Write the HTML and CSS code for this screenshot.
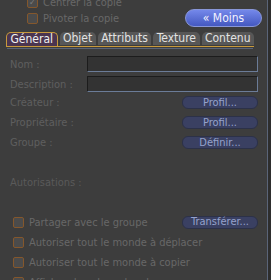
FILE: index.html
```html
<!DOCTYPE html>
<html>
<head>
  <link rel="stylesheet" href="styles.css">
</head>
<body>

<div class="panel">
  <div class="top">
    <div class="copy-opts">
      <label class="check"><span class="box checked">&#10003;</span> Centrer la copie</label>
      <label class="check"><span class="box"></span> Pivoter la copie</label>
    </div>
    <button class="less">&laquo; Moins</button>
  </div>

  <div class="tabs">
    <div class="tab active">Général</div>
    <div class="tab">Objet</div>
    <div class="tab">Attributs</div>
    <div class="tab">Texture</div>
    <div class="tab">Contenu</div>
  </div>

  <div class="content">
    <div class="row">
      <span class="lbl">Nom :</span>
      <input type="text" class="field">
    </div>
    <div class="row">
      <span class="lbl">Description :</span>
      <input type="text" class="field">
    </div>
    <div class="row short">
      <span class="lbl">Créateur :</span>
      <button class="btn">Profil...</button>
    </div>
    <div class="row short">
      <span class="lbl">Propriétaire :</span>
      <button class="btn">Profil...</button>
    </div>
    <div class="row short">
      <span class="lbl">Groupe :</span>
      <button class="btn">Définir...</button>
    </div>

    <div class="section">Autorisations :</div>

    <div class="perm">
      <label class="check"><span class="box"></span> Partager avec le groupe</label>
      <button class="btn">Transférer...</button>
    </div>
    <div class="perm">
      <label class="check"><span class="box"></span> Autoriser tout le monde à déplacer</label>
    </div>
    <div class="perm">
      <label class="check"><span class="box"></span> Autoriser tout le monde à copier</label>
    </div>
    <div class="perm">
      <label class="check"><span class="box"></span> Afficher dans la recherche</label>
    </div>
  </div>
</div>

</body>
</html>
```

FILE: styles.css
```css
body {
  margin: 0;
  background-color: #2e2e2e;
  font-family: "DejaVu Sans Condensed", "DejaVu Sans", sans-serif;
  font-stretch: condensed;
  font-size: 11px;
  overflow: hidden;
}

.panel {
  width: 267px;
  height: 280px;
  background-color: #3d3d3d;
  border-right: 1px solid #5a6478;
  overflow: hidden;
}

.top {
  display: flex;
  justify-content: space-between;
  margin-top: -4px;
  padding: 0 5px 0 27px;
}

.copy-opts {
  display: flex;
  flex-direction: column;
  gap: 4px;
}

.check {
  display: flex;
  align-items: center;
  gap: 5px;
  color: #686868;
  height: 12px;
  white-space: nowrap;
}

.box {
  width: 9px;
  height: 9px;
  background-color: #4b4b4b;
  border: 1px solid #84572c;
  border-radius: 2px;
  color: #7a7a7a;
  font-size: 9px;
  line-height: 9px;
  text-align: center;
}

.less {
  margin-top: 13px;
  width: 77px;
  height: 18px;
  border: 1px solid #8896d8;
  border-radius: 9px;
  background: linear-gradient(#7488ea, #4458c0);
  color: #f2f2ff;
  font-family: inherit;
  font-size: 12px;
  padding: 0;
}

.tabs {
  display: flex;
  gap: 2px;
  margin: 5px 0 0 6px;
  width: 248px;
  border-bottom: 1px solid #c89a3c;
  box-shadow: 0 2px 0 -1px #3d3d3d, 0 3px 0 -1px #5a6478;
}

.tab {
  flex: 1 1 auto;
  height: 13px;
  padding: 0 2px;
  background-color: #575757;
  color: #e2e2e2;
  border-radius: 5px 5px 0 0;
  font-size: 12px;
  line-height: 13px;
  text-align: center;
}

.tab.active {
  background-color: #4b3550;
  border: 1px solid #c89a3c;
  border-bottom: none;
  color: #f0f0f0;
}

.content {
  padding: 9px 9px 0 10px;
}

.row {
  display: flex;
  justify-content: space-between;
  align-items: center;
  height: 16px;
  margin-bottom: 4px;
}

.row.short {
  height: 13px;
  margin-bottom: 7px;
}

.lbl {
  color: #5f5f5f;
}

.field {
  width: 171px;
  height: 16px;
  box-sizing: border-box;
  background-color: #333333;
  border: 1px solid #6b7c98;
  border-top-color: #1c1c1c;
  border-left-color: #1c1c1c;
  padding: 0;
}

.btn {
  width: 76px;
  height: 13px;
  border: 1px solid #2c3148;
  border-radius: 6px;
  background-color: #3a4062;
  color: #95a2cc;
  font-family: inherit;
  font-size: 11px;
  line-height: 10px;
  padding: 0;
}

.section {
  color: #5a5a5a;
  margin-top: 27px;
  height: 40px;
}

.perm {
  display: flex;
  justify-content: space-between;
  align-items: center;
  height: 12px;
  margin-bottom: 8px;
  padding-left: 3px;
}
```
